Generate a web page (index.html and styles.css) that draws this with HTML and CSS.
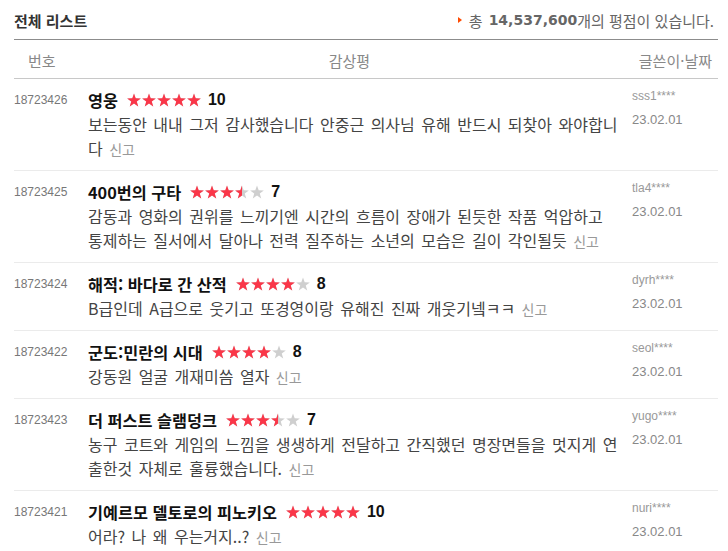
FILE: index.html
```html
<!DOCTYPE html>
<html lang="ko">
<head>
    <meta charset="utf-8">
    <title>전체 리스트</title>
    <link rel="stylesheet" href="styles.css">
</head>
<body>
<svg class="defs" width="0" height="0" aria-hidden="true">
    <symbol id="five" viewBox="0 0 74 14">
        <path id="star" d="M7 0.4 L8.7 5.25 L13.85 5.38 L9.76 8.5 L11.23 13.42 L7 10.5 L2.77 13.42 L4.24 8.5 L0.15 5.38 L5.3 5.25 Z"/>
        <use href="#star" x="15"/>
        <use href="#star" x="30"/>
        <use href="#star" x="45"/>
        <use href="#star" x="60"/>
    </symbol>
</svg>

<div class="board">
    <div class="board-head">
        <h2>전체 리스트</h2>
        <p class="total"><span class="tri"></span>총 <strong>14,537,600</strong>개의 평점이 있습니다.</p>
    </div>

    <div class="cols">
        <span class="c-num">번호</span>
        <span class="c-review">감상평</span>
        <span class="c-author">글쓴이·날짜</span>
    </div>

    <ul class="list">
        <li class="item">
            <div class="num">18723426</div>
            <div class="review">
                <div class="title">
                    <span class="movie">영웅</span>
                    <span class="stars"><svg class="base"><use href="#five"/></svg><span class="fill" style="width: 100%"><svg><use href="#five"/></svg></span></span>
                    <em class="score">10</em>
                </div>
                <p class="text">보는동안 내내 그저 감사했습니다 안중근 의사님 유해 반드시 되찾아 와야합니다 <a class="report" href="#">신고</a></p>
            </div>
            <div class="author"><span class="id">sss1****</span><span class="date">23.02.01</span></div>
        </li>
        <li class="item">
            <div class="num">18723425</div>
            <div class="review">
                <div class="title">
                    <span class="movie">400번의 구타</span>
                    <span class="stars"><svg class="base"><use href="#five"/></svg><span class="fill" style="width: 70%"><svg><use href="#five"/></svg></span></span>
                    <em class="score">7</em>
                </div>
                <p class="text">감동과 영화의 권위를 느끼기엔 시간의 흐름이 장애가 된듯한 작품 억압하고 통제하는 질서에서 달아나 전력 질주하는 소년의 모습은 길이 각인될듯 <a class="report" href="#">신고</a></p>
            </div>
            <div class="author"><span class="id">tla4****</span><span class="date">23.02.01</span></div>
        </li>
        <li class="item">
            <div class="num">18723424</div>
            <div class="review">
                <div class="title">
                    <span class="movie">해적: 바다로 간 산적</span>
                    <span class="stars"><svg class="base"><use href="#five"/></svg><span class="fill" style="width: 80%"><svg><use href="#five"/></svg></span></span>
                    <em class="score">8</em>
                </div>
                <p class="text">B급인데 A급으로 웃기고 또경영이랑 유해진 진짜 개웃기넼ㅋㅋ <a class="report" href="#">신고</a></p>
            </div>
            <div class="author"><span class="id">dyrh****</span><span class="date">23.02.01</span></div>
        </li>
        <li class="item">
            <div class="num">18723422</div>
            <div class="review">
                <div class="title">
                    <span class="movie">군도:민란의 시대</span>
                    <span class="stars"><svg class="base"><use href="#five"/></svg><span class="fill" style="width: 80%"><svg><use href="#five"/></svg></span></span>
                    <em class="score">8</em>
                </div>
                <p class="text">강동원 얼굴 개재미씀 열자 <a class="report" href="#">신고</a></p>
            </div>
            <div class="author"><span class="id">seol****</span><span class="date">23.02.01</span></div>
        </li>
        <li class="item">
            <div class="num">18723423</div>
            <div class="review">
                <div class="title">
                    <span class="movie">더 퍼스트 슬램덩크</span>
                    <span class="stars"><svg class="base"><use href="#five"/></svg><span class="fill" style="width: 70%"><svg><use href="#five"/></svg></span></span>
                    <em class="score">7</em>
                </div>
                <p class="text">농구 코트와 게임의 느낌을 생생하게 전달하고 간직했던 명장면들을 멋지게 연출한것 자체로 훌륭했습니다. <a class="report" href="#">신고</a></p>
            </div>
            <div class="author"><span class="id">yugo****</span><span class="date">23.02.01</span></div>
        </li>
        <li class="item">
            <div class="num">18723421</div>
            <div class="review">
                <div class="title">
                    <span class="movie">기예르모 델토로의 피노키오</span>
                    <span class="stars"><svg class="base"><use href="#five"/></svg><span class="fill" style="width: 100%"><svg><use href="#five"/></svg></span></span>
                    <em class="score">10</em>
                </div>
                <p class="text">어라? 나 왜 우는거지..? <a class="report" href="#">신고</a></p>
            </div>
            <div class="author"><span class="id">nuri****</span><span class="date">23.02.01</span></div>
        </li>
    </ul>
</div>
</body>
</html>
```

FILE: styles.css
```css
body {
    margin: 0;
    padding: 0 10px 0 14px;
    background: #fff;
    color: #333;
    font-family: "Noto Sans CJK KR", "Noto Sans", sans-serif;
}

.defs {
    position: absolute;
    width: 0;
    height: 0;
    overflow: hidden;
}

.board-head {
    display: flex;
    justify-content: space-between;
    align-items: center;
    height: 38px;
    padding-top: 1px;
    border-bottom: 1px solid #8c8c8c;
}

.board-head h2 {
    margin: 0;
    font-size: 15px;
    font-weight: bold;
    color: #333;
}

.total {
    margin: 0 4px 0 0;
    font-size: 15px;
    color: #666;
    display: flex;
    align-items: center;
}

.total strong {
    font-family: "DejaVu Sans", Tahoma, sans-serif;
    font-size: 14px;
    color: #666;
    margin-left: 6px;
}

.tri {
    width: 0;
    height: 0;
    border-top: 3.5px solid transparent;
    border-bottom: 3.5px solid transparent;
    border-left: 4px solid #ff4a00;
    margin-right: 7px;
}

.cols {
    display: flex;
    height: 36px;
    align-items: center;
    border-bottom: 1px solid #c8c8c8;
    font-size: 15px;
    color: #888;
    padding-top: 2px;
}

.c-num {
    width: 74px;
    padding-left: 14px;
    box-sizing: border-box;
}

.c-review {
    flex: 1;
    text-align: center;
    padding-right: 28px;
}

.c-author {
    padding-right: 6px;
}

.list {
    list-style: none;
    margin: 0;
    padding: 0;
}

.item {
    display: flex;
    border-bottom: 1px solid #ebebeb;
    padding: 10px 0 9px;
}

.num {
    width: 74px;
    flex: none;
    font-family: "Liberation Sans", Tahoma, sans-serif;
    font-size: 12px;
    line-height: 22px;
    color: #777;
}

.review {
    flex: 1;
    min-width: 0;
    padding-right: 13px;
}

.title {
    display: flex;
    align-items: center;
    height: 24px;
    margin-top: -1px;
}

.movie {
    font-size: 16.3px;
    font-weight: bold;
    color: #111;
}

.stars {
    position: relative;
    display: inline-block;
    width: 74px;
    height: 14px;
    margin-left: 9px;
    margin-top: -1px;
}

.stars svg {
    display: block;
    width: 74px;
    height: 14px;
}

.stars .base {
    fill: #cfcfcf;
}

.stars .fill {
    position: absolute;
    top: 0;
    left: 0;
    height: 14px;
    overflow: hidden;
    fill: #fa3648;
}

.score {
    font-style: normal;
    font-weight: bold;
    font-family: "Liberation Sans", Tahoma, sans-serif;
    font-size: 16px;
    color: #111;
    margin-left: 7px;
}

.text {
    margin: 0;
    font-size: 16px;
    line-height: 24px;
    word-spacing: 2px;
    color: #444;
}

.report {
    font-size: 14px;
    word-spacing: 0;
    color: #999;
    text-decoration: none;
}

.author {
    width: 86px;
    flex: none;
    display: flex;
    flex-direction: column;
    margin-top: -3px;
}

.id {
    font-family: "Liberation Sans", Tahoma, sans-serif;
    font-size: 12px;
    line-height: 20px;
    color: #999;
}

.date {
    font-family: "Liberation Sans", Tahoma, sans-serif;
    font-size: 13px;
    line-height: 24px;
    margin-top: 2px;
    color: #888;
}
```
